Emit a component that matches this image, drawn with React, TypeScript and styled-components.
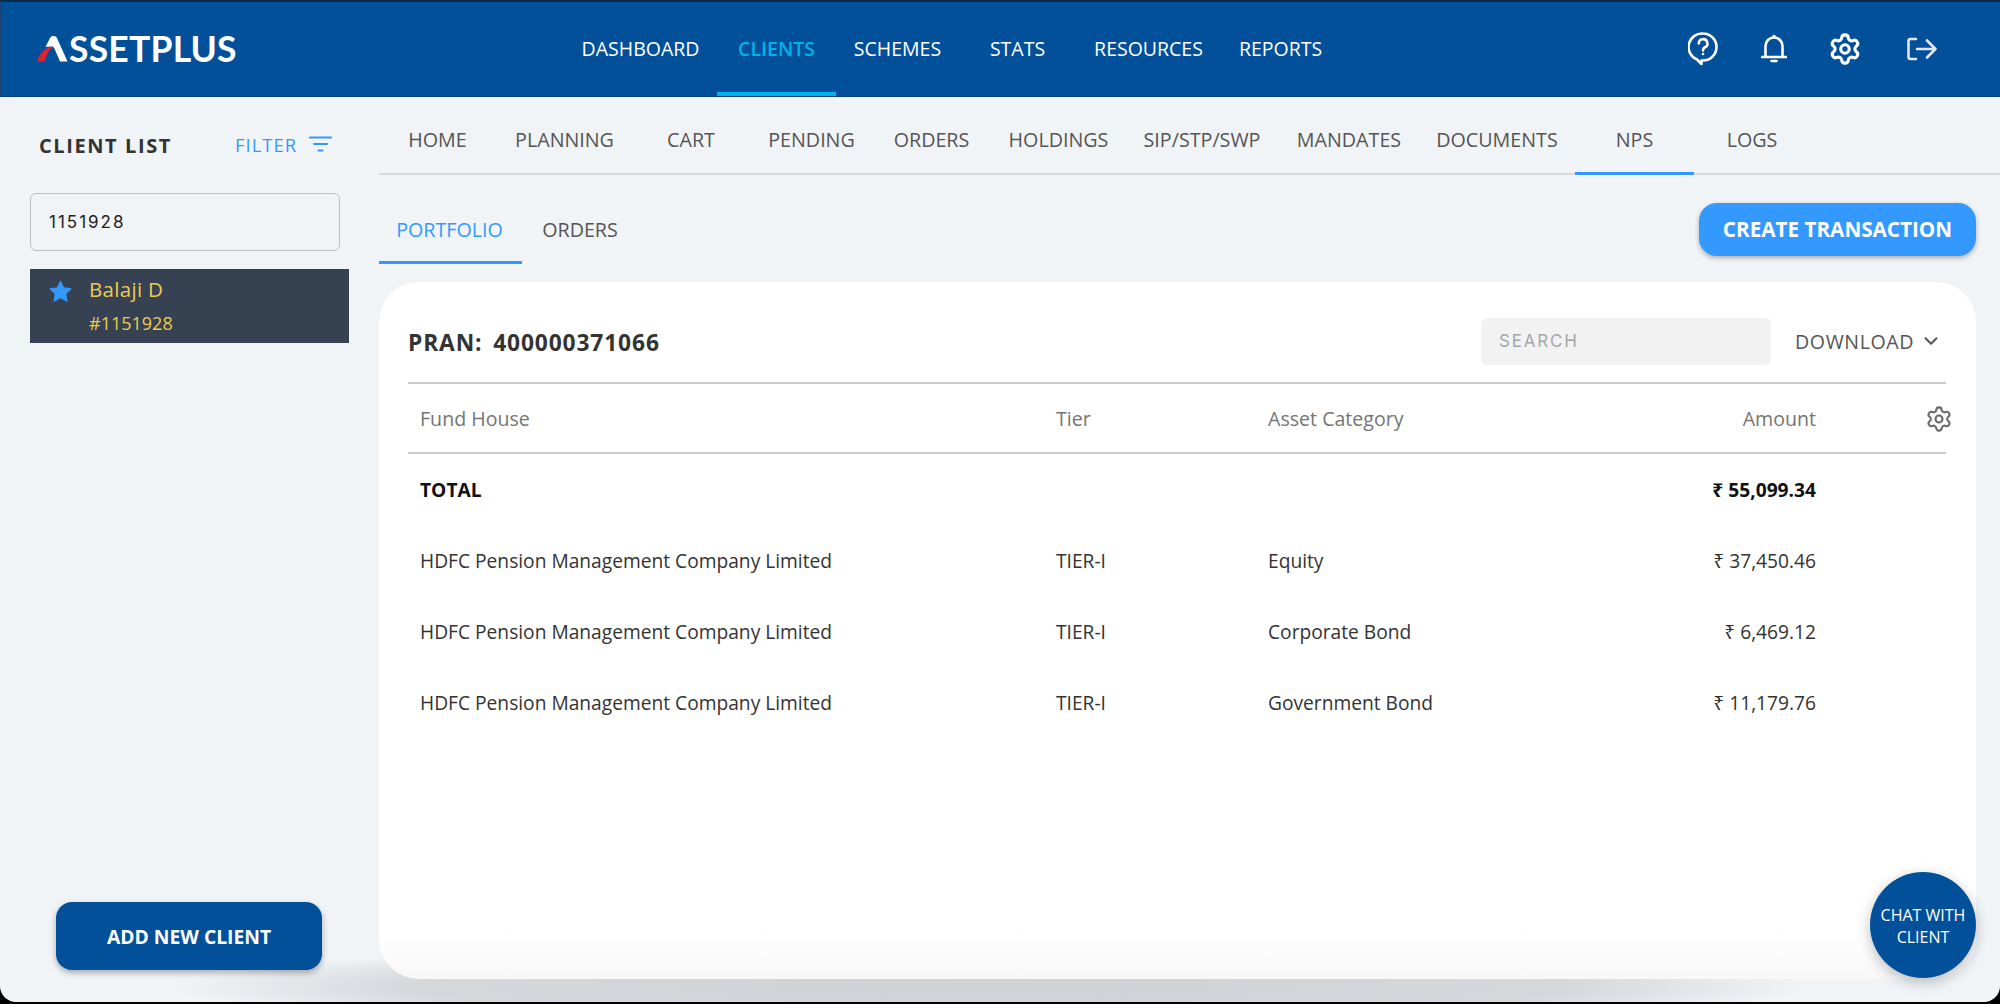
import React from "react";
import styled, { createGlobalStyle } from "styled-components";
import { Settings, ChevronDown } from "lucide-react";

const Global = createGlobalStyle`
  html, body { margin: 0; padding: 0; background: #000; }
  body { font-family: "Open Sans", "Noto Sans", sans-serif; }
  * { box-sizing: border-box; }
`;

const Frame = styled.div`
  position: relative;
  width: 2000px;
  height: 1002px;
  background: #f1f4f7;
  border-radius: 0 0 16px 16px;
  overflow: hidden;
  display: flex;
  flex-direction: column;
`;
const Header = styled.header`
  height: 97px;
  flex: none;
  background: #03509a;
  border-top: 2px solid #0b2a4a;
  border-left: 1px solid #1c3f6b;
  border-bottom: 1px solid #023f80;
  display: flex;
  align-items: stretch;
`;
const Logo = styled.div`
  width: 563px;
  padding-left: 36px;
  display: flex;
  align-items: center;
  flex: none;
  svg { display: block; margin-right: 1px; }
`;
const LogoText = styled.span`
  font-family: "Lato", sans-serif;
  font-weight: 700;
  font-size: 35.5px;
  line-height: 1;
  color: #fff;
  letter-spacing: 0.2px;
`;
const Nav = styled.nav`
  display: flex;
  flex: none;
  width: 776px;
`;
const NavItem = styled.a<{ $w: number; $active?: boolean }>`
  width: ${(p) => p.$w}px;
  display: flex;
  align-items: center;
  justify-content: center;
  font-size: 19.5px;
  font-weight: ${(p) => (p.$active ? 600 : 400)};
  color: ${(p) => (p.$active ? "#00b2e8" : "#fff")};
  border-bottom: 4px solid ${(p) => (p.$active ? "#00b2e8" : "transparent")};
  padding-top: 2px;
`;
const HeaderIcons = styled.div`
  display: flex;
  align-items: center;
  margin-left: 327px;
  svg { display: block; }
`;
const IconSlot = styled.span<{ $w: number }>`
  width: ${(p) => p.$w}px;
  display: flex;
  justify-content: center;
  color: #fff;
`;
const Body = styled.div`
  flex: 1;
  display: flex;
  min-height: 0;
  position: relative;
`;
const Shade = styled.div`
  position: absolute;
  left: 170px;
  width: 1640px;
  bottom: -30px;
  height: 90px;
  background: radial-gradient(ellipse 50% 50% at 50% 50%, rgba(70,75,80,0.2) 0%, rgba(70,75,80,0.17) 70%, rgba(70,75,80,0) 100%);
`;
const Sidebar = styled.aside`
  position: relative;
  width: 379px;
  flex: none;
  padding: 0 30px;
  display: flex;
  flex-direction: column;
`;
const ListHead = styled.div`
  height: 96px;
  display: flex;
  align-items: center;
  padding: 0 0 0 9px;
`;
const ListTitle = styled.h2`
  margin: 0;
  font-size: 20px;
  font-weight: 700;
  letter-spacing: 1.6px;
  color: #333;
  width: 196px;
`;
const FilterBtn = styled.span`
  display: flex;
  align-items: center;
  gap: 12px;
  color: #3399ff;
  font-size: 18.5px;
  letter-spacing: 1px;
  margin-top: -2px;
`;
const SearchBox = styled.input`
  width: 310px;
  height: 58px;
  border: 1.5px solid #bcbfc2;
  border-radius: 6px;
  background: transparent;
  padding: 0 18px;
  font-family: "Inter", sans-serif;
  font-size: 17px;
  letter-spacing: 2px;
  color: #222;
  outline: none;
`;
const ClientRow = styled.div`
  margin-top: 18px;
  width: 319px;
  height: 74px;
  background: #364152;
  display: flex;
  padding: 7px 0 0 19px;
  gap: 17px;
  svg { margin-top: 4px; }
`;
const ClientInfo = styled.div`
  display: flex;
  flex-direction: column;
  color: #eecb50;
`;
const ClientName = styled.span`
  font-size: 20.5px;
  line-height: 27px;
  letter-spacing: 0.3px;
`;
const ClientId = styled.span`
  font-size: 18px;
  line-height: 24px;
  margin-top: 8px;
`;
const AddBtn = styled.button`
  margin: auto 0 32px 26px;
  width: 266px;
  height: 68px;
  border: 0;
  border-radius: 16px;
  background: #03509a;
  color: #fff;
  font-family: inherit;
  font-weight: 700;
  font-size: 19.3px;
  box-shadow: 0 3px 6px rgba(0, 0, 0, 0.3);
`;
const Main = styled.main`
  position: relative;
  flex: 1;
  min-width: 0;
  display: flex;
  flex-direction: column;
`;
const SubTabs = styled.div`
  height: 78px;
  display: flex;
  border-bottom: 2px solid #d8dadd;
  flex: none;
`;
const SubTab = styled.a<{ $w: number; $active?: boolean }>`
  width: ${(p) => p.$w}px;
  margin-left: ${(p) => (p.$active ? "3px" : "0")};
  display: flex;
  align-items: center;
  justify-content: center;
  font-size: 19.7px;
  color: #555;
  margin-bottom: -2px;
  border-bottom: 3px solid ${(p) => (p.$active ? "#3399ff" : "transparent")};
  padding-top: 10px;
`;
const ActionBar = styled.div`
  height: 107px;
  flex: none;
  display: flex;
  align-items: flex-start;
  justify-content: space-between;
  padding-right: 24px;
`;
const ViewTabs = styled.div`
  display: flex;
  height: 89px;
`;
const ViewTab = styled.a<{ $w: number; $active?: boolean }>`
  width: ${(p) => p.$w}px;
  display: flex;
  align-items: center;
  justify-content: center;
  font-size: 19.7px;
  color: ${(p) => (p.$active ? "#3399ff" : "#555")};
  border-bottom: 3px solid ${(p) => (p.$active ? "#3399ff" : "transparent")};
  padding: 22px ${(p) => (p.$active ? "2px" : "0")} 0 0;
`;
const CreateBtn = styled.button`
  margin-top: 28px;
  width: 277px;
  height: 53px;
  border: 0;
  border-radius: 18px;
  background: #3399ff;
  color: #fff;
  font-family: inherit;
  font-weight: 700;
  font-size: 20.7px;
  padding: 0 0 2px;
  box-shadow: 0 2px 5px rgba(0, 0, 0, 0.3);
`;
const Card = styled.section`
  margin-right: 24px;
  height: 697px;
  flex: none;
  border-radius: 40px;
  background: linear-gradient(#fff 93%, #f8f8f8 100%);
  padding: 0 30px 0 29px;
`;
const CardHead = styled.div`
  height: 102px;
  display: flex;
  align-items: center;
  border-bottom: 2px solid #ccc;
  padding-top: 18px;
`;
const Pran = styled.h3`
  margin: 2px 0 0;
  flex: 1;
  font-size: 22.8px;
  font-weight: 700;
  letter-spacing: 0.85px;
  color: #333;
  word-spacing: 4px;
`;
const SearchField = styled.div`
  width: 290px;
  height: 47px;
  background: #f2f2f2;
  border-radius: 6px;
  padding: 0 18px;
  display: flex;
  align-items: center;
  font-family: "Inter", sans-serif;
  font-size: 17px;
  letter-spacing: 1.8px;
  color: #a6a6a6;
`;
const Download = styled.div`
  width: 175px;
  padding-left: 24px;
  display: flex;
  align-items: center;
  gap: 6px;
  font-size: 19.6px;
  letter-spacing: 0.6px;
  color: #555;
  white-space: nowrap;
  svg { flex: none; }
`;
const Row = styled.div<{ $head?: boolean }>`
  display: grid;
  grid-template-columns: 636px 212px 200px 348px 1fr;
  align-items: center;
  padding-left: 12px;
  height: ${(p) => (p.$head ? "70px" : "71px")};
  border-bottom: ${(p) => (p.$head ? "2px solid #ccc" : "0")};
  font-size: ${(p) => (p.$head ? "19.6px" : "19.2px")};
  font-weight: ${(p) => (p.$head ? 500 : 400)};
  color: ${(p) => (p.$head ? "#757575" : "#333")};
  white-space: nowrap;
`;
const Total = styled.span`
  font-weight: 700;
  color: #111;
`;
const Amount = styled.span<{ $strong?: boolean }>`
  text-align: right;
  font-weight: ${(p) => (p.$strong ? 700 : "inherit")};
  color: ${(p) => (p.$strong ? "#111" : "inherit")};
`;
const GearCell = styled.span`
  display: flex;
  justify-content: flex-end;
  margin-right: -7px;
  padding-top: 1px;
  color: #6b6b6b;
  svg { display: block; }
`;
const Chat = styled.button`
  position: absolute;
  left: 1870px;
  top: 872px;
  width: 106px;
  height: 106px;
  border: 0;
  border-radius: 50%;
  background: #03509a;
  color: #fff;
  font-family: inherit;
  font-size: 16px;
  line-height: 22px;
  padding: 2px 4px 0;
  box-shadow: 0 4px 14px rgba(0, 0, 0, 0.25);
`;

const nav: [string, number, boolean?][] = [
  ["DASHBOARD", 153],
  ["CLIENTS", 119, true],
  ["SCHEMES", 123],
  ["STATS", 117],
  ["RESOURCES", 145],
  ["REPORTS", 119],
];
const tabs: [string, number, boolean?][] = [
  ["HOME", 117],
  ["PLANNING", 137],
  ["CART", 116],
  ["PENDING", 125],
  ["ORDERS", 115],
  ["HOLDINGS", 139],
  ["SIP/STP/SWP", 148],
  ["MANDATES", 146],
  ["DOCUMENTS", 150],
  ["NPS", 119, true],
  ["LOGS", 116],
];
const rows = [
  ["TIER-I", "Equity", "₹ 37,450.46"],
  ["TIER-I", "Corporate Bond", "₹ 6,469.12"],
  ["TIER-I", "Government Bond", "₹ 11,179.76"],
];

const LogoA = () => (
  <svg width="31" height="26" viewBox="0 0 31 26">
    <path d="M8.5 11 L13 2 Q14 0 16 0 H17 Q19 0 20 2 L30.5 25.5 H23 L17 11.5 Q16 10 14 10.5 Z" fill="#fff" />
    <path d="M0 25.5 Q3 14 14.5 10.5 Q16.5 10.5 15.5 12 Q11 13 7.5 25.5 Z" fill="#e3202e" />
  </svg>
);
const HelpIcon = () => (
  <svg width="30" height="34" viewBox="0 0 30 34" fill="none" stroke="#fff" strokeWidth="2.6">
    <path d="M15 1.5 A13.5 13.5 0 1 1 15 28.5 L13.5 28.5 L13.5 32 L9 27.5 A13.5 13.5 0 0 1 15 1.5 Z" strokeLinejoin="round" />
    <path d="M10.8 11.5 A4.3 4.3 0 1 1 16.5 15.5 Q15 16.2 15 18.5" strokeLinecap="round" />
    <circle cx="15" cy="22" r="1.3" fill="#fff" stroke="none" />
  </svg>
);
const BellIcon = () => (
  <svg width="26" height="30" viewBox="0 0 26 30" fill="none" stroke="#fff" strokeWidth="2.6">
    <path d="M4.5 22 V12 A8.5 8.5 0 0 1 21.5 12 V22" />
    <path d="M1 23 H25" strokeLinecap="round" />
    <circle cx="13" cy="2.5" r="1.8" fill="#fff" stroke="none" />
    <path d="M10.5 27 H15.5" strokeLinecap="round" />
  </svg>
);
const LogoutIcon = () => (
  <svg width="30" height="24" viewBox="0 0 30 24" fill="none" stroke="#e4e6ea" strokeWidth="2.6" strokeLinecap="round" strokeLinejoin="round">
    <path d="M9 2 H3.5 Q1.5 2 1.5 4 V20 Q1.5 22 3.5 22 H9" />
    <path d="M10 12 H28.5 M20 3.5 L28.5 12 L20 20.5" />
  </svg>
);
const FilterIcon = () => (
  <svg width="23" height="16" viewBox="0 0 23 16" fill="none" stroke="#3399ff" strokeWidth="2.2" strokeLinecap="round">
    <path d="M1 1.5 H22 M5 8 H18 M9.5 14.5 H13.5" />
  </svg>
);
const StarIcon = () => (
  <svg width="23" height="23" viewBox="0 0 24 24" fill="#3399ff">
    <path d="M12 1 L15.4 8.2 L23.2 9.2 L17.5 14.6 L19 22.4 L12 18.6 L5 22.4 L6.5 14.6 L0.8 9.2 L8.6 8.2 Z" stroke="#3399ff" strokeWidth="1" strokeLinejoin="round" />
  </svg>
);

export default function App() {
  return (
    <Frame>
      <Global />
      <Header>
        <Logo>
          <LogoA />
          <LogoText>SSETPLUS</LogoText>
        </Logo>
        <Nav>
          {nav.map(([t, w, a]) => (
            <NavItem key={t} $w={w} $active={a}>{t}</NavItem>
          ))}
        </Nav>
        <HeaderIcons>
          <IconSlot $w={71}><HelpIcon /></IconSlot>
          <IconSlot $w={71}><BellIcon /></IconSlot>
          <IconSlot $w={72}><Settings size={34} strokeWidth={2.2} /></IconSlot>
          <IconSlot $w={82}><LogoutIcon /></IconSlot>
        </HeaderIcons>
      </Header>
      <Body>
        <Shade />
        <Sidebar>
          <ListHead>
            <ListTitle>CLIENT LIST</ListTitle>
            <FilterBtn>FILTER <FilterIcon /></FilterBtn>
          </ListHead>
          <SearchBox defaultValue="1151928" />
          <ClientRow>
            <StarIcon />
            <ClientInfo>
              <ClientName>Balaji D</ClientName>
              <ClientId>#1151928</ClientId>
            </ClientInfo>
          </ClientRow>
          <AddBtn>ADD NEW CLIENT</AddBtn>
        </Sidebar>
        <Main>
          <SubTabs>
            {tabs.map(([t, w, a]) => (
              <SubTab key={t} $w={w} $active={a}>{t}</SubTab>
            ))}
          </SubTabs>
          <ActionBar>
            <ViewTabs>
              <ViewTab $w={143} $active>PORTFOLIO</ViewTab>
              <ViewTab $w={116}>ORDERS</ViewTab>
            </ViewTabs>
            <CreateBtn>CREATE TRANSACTION</CreateBtn>
          </ActionBar>
          <Card>
            <CardHead>
              <Pran>PRAN: 400000371066</Pran>
              <SearchField>SEARCH</SearchField>
              <Download>DOWNLOAD <ChevronDown size={22} strokeWidth={2.2} /></Download>
            </CardHead>
            <Row $head>
              <span>Fund House</span>
              <span>Tier</span>
              <span>Asset Category</span>
              <Amount>Amount</Amount>
              <GearCell><Settings size={28} strokeWidth={1.8} /></GearCell>
            </Row>
            <Row>
              <Total>TOTAL</Total>
              <span />
              <span />
              <Amount $strong>₹ 55,099.34</Amount>
            </Row>
            {rows.map(([tier, cat, amt]) => (
              <Row key={cat}>
                <span>HDFC Pension Management Company Limited</span>
                <span>{tier}</span>
                <span>{cat}</span>
                <Amount>{amt}</Amount>
              </Row>
            ))}
          </Card>
        </Main>
      </Body>
      <Chat>CHAT WITH CLIENT</Chat>
    </Frame>
  );
}
